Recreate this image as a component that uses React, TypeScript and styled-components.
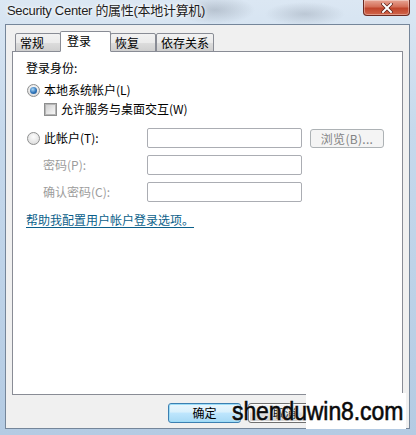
import styled, {createGlobalStyle} from 'styled-components';

const GlobalStyle = createGlobalStyle`
  html, body {
    margin: 0;
    padding: 0;
    background: #c9dbee;
  }
  * {
    box-sizing: border-box;
  }
`;

const UI_FONT = `"Noto Sans CJK SC", "Noto Sans", sans-serif`;

const Window = styled.div`
  position: relative;
  width: 416px;
  height: 435px;
  overflow: hidden;
  display: flex;
  flex-direction: column;
  padding: 0 6px 6px 5px;
  background:
    radial-gradient(ellipse 40px 14px at 215px 10px, rgba(120, 130, 145, 0.35), transparent),
    radial-gradient(ellipse 40px 12px at 305px 14px, rgba(120, 130, 145, 0.3), transparent),
    linear-gradient(180deg, #dbe7f3 0%, #c6d9ec 30%, #b4cbe3 100%);
  font-family: ${UI_FONT};
`;

const TitleBar = styled.div`
  height: 24px;
  display: flex;
  align-items: flex-start;
  padding-left: 2px;
`;

const Title = styled.span`
  margin-top: 2px;
  font-family: "Liberation Sans", "Noto Sans CJK SC", sans-serif;
  font-size: 13px;
  line-height: 18px;
  letter-spacing: -0.3px;
  color: #1e1e1e;
  text-shadow: 0 0 6px #fff, 0 0 3px #fff;
`;

const CloseButton = styled.div`
  margin-left: auto;
  width: 47px;
  height: 16px;
  border: 1px solid #6b2a22;
  border-top: none;
  border-radius: 0 0 4px 4px;
  background: linear-gradient(180deg, #e7a595 0%, #d46f58 45%, #c0452c 55%, #d1654b 100%);
  box-shadow: inset 0 0 0 1px rgba(255, 255, 255, 0.35);
  display: flex;
  align-items: center;
  justify-content: center;
`;

const Client = styled.div`
  flex: 1;
  display: flex;
  flex-direction: column;
  background: #f0f0f0;
  border: 1px solid #75869a;
  padding: 6px 6px 0 6px;
`;

const TabStrip = styled.div`
  display: flex;
  align-items: flex-end;
  height: 21px;
  padding-left: 3px;
  position: relative;
  z-index: 1;
  margin-bottom: -1px;
`;

const Tab = styled.div<{active?: boolean}>`
  height: ${p => (p.active ? '21px' : '19px')};
  min-width: ${p => (p.active ? '51px' : '46px')};
  padding: 0 ${p => (p.active ? '6px' : '4px')};
  margin: 0 ${p => (p.active ? '-1px' : '0')};
  border: 1px solid #898c95;
  border-bottom: ${p => (p.active ? '1px solid #fff' : '1px solid #898c95')};
  border-radius: 2px 2px 0 0;
  background: ${p =>
    p.active ? '#fff' : 'linear-gradient(180deg, #f2f2f2 0%, #ebebeb 50%, #dddddd 51%, #cfcfcf 100%)'};
  font-size: 12px;
  line-height: 17px;
  color: #000;
  z-index: ${p => (p.active ? 2 : 1)};
  position: relative;
`;

const Panel = styled.div`
  height: 344px;
  background: #fff;
  border: 1px solid #898c95;
  padding: 8px 13px 0 13px;
  display: flex;
  flex-direction: column;
  font-size: 12px;
  line-height: 16px;
  color: #000;
`;

const Label = styled.div<{disabled?: boolean}>`
  font-size: 12px;
  line-height: 16px;
  color: ${p => (p.disabled ? '#9c9c9c' : '#000')};
  white-space: nowrap;
`;

const OptionRow = styled.div<{indent?: number; top?: number}>`
  display: flex;
  align-items: center;
  gap: 4px;
  padding-left: ${p => p.indent ?? 0}px;
  margin-top: ${p => p.top ?? 0}px;
  height: 16px;
`;

const Radio = styled.span<{checked?: boolean}>`
  width: 13px;
  height: 13px;
  margin-left: 1px;
  border-radius: 50%;
  border: 1px solid #8e8f8f;
  background: radial-gradient(circle at 50% 35%, #fdfdfd 0%, #e2e2e2 70%, #cfcfcf 100%);
  display: flex;
  align-items: center;
  justify-content: center;
  &::after {
    content: '';
    display: ${p => (p.checked ? 'block' : 'none')};
    width: 7px;
    height: 7px;
    border-radius: 50%;
    background: radial-gradient(circle at 40% 35%, #a8d8f8 0%, #2f73b8 55%, #1c4f86 100%);
  }
`;

const Checkbox = styled.span`
  width: 13px;
  height: 13px;
  border: 1px solid #8e8f8f;
  background: #fff;
  display: flex;
  align-items: center;
  justify-content: center;
  &::after {
    content: '';
    width: 9px;
    height: 9px;
    border: 1px solid #b5b5b5;
    background: linear-gradient(135deg, #cfcfcf 0%, #e8e8e8 60%, #f6f6f6 100%);
  }
`;

const FieldGrid = styled.div`
  display: grid;
  grid-template-columns: 113px 155px auto;
  grid-auto-rows: 20px;
  row-gap: 7px;
  column-gap: 8px;
  align-items: center;
  margin-top: 11px;
`;

const FieldLabel = styled.div<{indent?: number}>`
  display: flex;
  align-items: center;
  gap: 4px;
  padding-left: ${p => p.indent ?? 0}px;
`;

const Input = styled.div`
  height: 20px;
  border: 1px solid #abadb3;
  border-radius: 2px;
  background: #fff;
`;

const BrowseButton = styled.div`
  width: 74px;
  height: 19px;
  border: 1px solid #adb2b5;
  border-radius: 3px;
  background: #f4f4f4;
  color: #838383;
  font-size: 12px;
  line-height: 17px;
  text-align: center;
  letter-spacing: 0.3px;
`;

const HelpLink = styled.a`
  margin-top: 10px;
  align-self: flex-start;
  color: #0b5f8a;
  text-decoration: underline;
  text-underline-offset: 2px;
  font-size: 12px;
  line-height: 16px;
`;

const ButtonRow = styled.div`
  display: flex;
  gap: 7px;
  padding-left: 156px;
  margin-top: 8px;
`;

const DialogButton = styled.div<{primary?: boolean}>`
  width: 73px;
  height: 20px;
  border-radius: 3px;
  border: 1px solid ${p => (p.primary ? '#3c7fb1' : '#707070')};
  background: ${p =>
    p.primary
      ? 'linear-gradient(180deg, #eaf6fd 0%, #d9f0fc 45%, #bee6fd 50%, #a7d9f5 100%)'
      : 'linear-gradient(180deg, #f2f2f2 0%, #ebebeb 45%, #dddddd 50%, #cfcfcf 100%)'};
  box-shadow: ${p => (p.primary ? 'inset 0 0 0 1px #9cdcf7' : 'inset 0 0 0 1px #fcfcfc')};
  font-size: 12px;
  line-height: 18px;
  text-align: center;
  color: #000;
`;

const Watermark = styled.div`
  position: absolute;
  left: 232px;
  top: 393px;
  width: 175px;
  height: 36px;
  display: flex;
  align-items: center;
  &::before {
    content: '';
    position: absolute;
    left: 74px;
    top: 0;
    width: 100px;
    height: 36px;
    background: #fff;
  }
`;

const WatermarkText = styled.span`
  position: relative;
  font-family: "Liberation Sans", Arial, sans-serif;
  font-size: 23px;
  line-height: 24px;
  letter-spacing: -0.1px;
  color: #0a0a0a;
  -webkit-text-stroke: 0.5px #0a0a0a;
  text-shadow: 0 0 2px #fff, 0 0 1px #fff;
  transform: scaleY(1.12);
`;

export default function App() {
  return (
    <>
      <GlobalStyle />
      <Window>
        <TitleBar>
          <Title>Security Center 的属性(本地计算机)</Title>
          <CloseButton>
            <svg width="12" height="10" viewBox="0 0 12 10">
              <path d="M2 1 L10 9 M10 1 L2 9" stroke="#5a2018" strokeWidth="3.4" strokeLinecap="square" />
              <path d="M2 1 L10 9 M10 1 L2 9" stroke="#fff" strokeWidth="2" strokeLinecap="square" />
            </svg>
          </CloseButton>
        </TitleBar>
        <Client>
          <TabStrip>
            <Tab>常规</Tab>
            <Tab active>登录</Tab>
            <Tab>恢复</Tab>
            <Tab>依存关系</Tab>
          </TabStrip>
          <Panel>
            <Label>登录身份:</Label>
            <OptionRow top={6}>
              <Radio checked />
              <Label>本地系统帐户(L)</Label>
            </OptionRow>
            <OptionRow indent={18} top={3}>
              <Checkbox />
              <Label>允许服务与桌面交互(W)</Label>
            </OptionRow>
            <FieldGrid>
              <FieldLabel>
                <Radio />
                <Label>此帐户(T):</Label>
              </FieldLabel>
              <Input />
              <BrowseButton>浏览(B)...</BrowseButton>
              <FieldLabel indent={17}>
                <Label disabled>密码(P):</Label>
              </FieldLabel>
              <Input />
              <span />
              <FieldLabel indent={17}>
                <Label disabled>确认密码(C):</Label>
              </FieldLabel>
              <Input />
              <span />
            </FieldGrid>
            <HelpLink href="#">帮助我配置用户帐户登录选项。</HelpLink>
          </Panel>
          <ButtonRow>
            <DialogButton primary>确定</DialogButton>
            <DialogButton>取消</DialogButton>
            <DialogButton>应用(A)</DialogButton>
          </ButtonRow>
        </Client>
        <Watermark>
          <WatermarkText>shenduwin8.com</WatermarkText>
        </Watermark>
      </Window>
    </>
  );
}
